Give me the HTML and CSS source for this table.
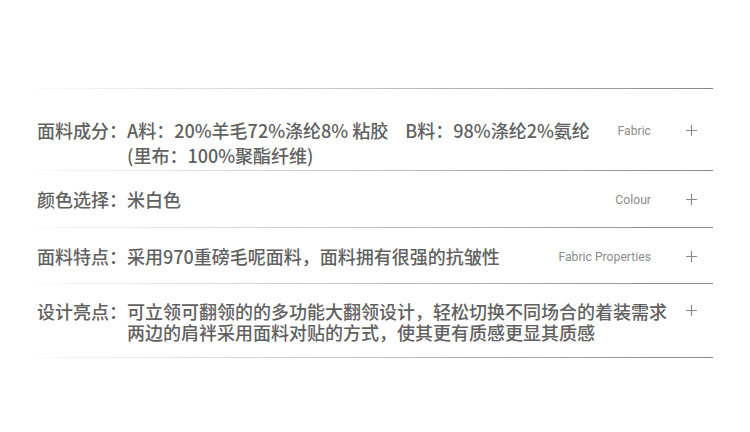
FILE: index.html
```html
<!DOCTYPE html>
<html lang="zh-CN">
<head>
  <meta charset="UTF-8">
  <title>商品详情</title>
  <link rel="stylesheet" href="styles.css">
</head>
<body>
  <div class="spec-list">
    <div class="spec-row first">
      <span class="spec-label">面料成分：</span>
      <span class="spec-value">A料：20%羊毛72%涤纶8% 粘胶<span class="gap"></span>B料：98%涤纶2%氨纶<br>(里布：100%聚酯纤维)</span>
      <span class="spec-en">Fabric</span>
      <span class="spec-plus"><svg width="11" height="11" viewBox="0 0 11 11"><path d="M5.5 0V11M0 5.5H11" stroke="#8a8a8a" stroke-width="1.2"/></svg></span>
    </div>
    <div class="spec-row">
      <span class="spec-label">颜色选择：</span>
      <span class="spec-value">米白色</span>
      <span class="spec-en">Colour</span>
      <span class="spec-plus"><svg width="11" height="11" viewBox="0 0 11 11"><path d="M5.5 0V11M0 5.5H11" stroke="#8a8a8a" stroke-width="1.2"/></svg></span>
    </div>
    <div class="spec-row third">
      <span class="spec-label">面料特点：</span>
      <span class="spec-value">采用970重磅毛呢面料，面料拥有很强的抗皱性</span>
      <span class="spec-en">Fabric Properties</span>
      <span class="spec-plus"><svg width="11" height="11" viewBox="0 0 11 11"><path d="M5.5 0V11M0 5.5H11" stroke="#8a8a8a" stroke-width="1.2"/></svg></span>
    </div>
    <div class="spec-row last">
      <span class="spec-label">设计亮点：</span>
      <span class="spec-value">可立领可翻领的的多功能大翻领设计，轻松切换不同场合的着装需求<br>两边的肩袢采用面料对贴的方式，使其更有质感更显其质感</span>
      <span class="spec-plus"><svg width="11" height="11" viewBox="0 0 11 11"><path d="M5.5 0V11M0 5.5H11" stroke="#8a8a8a" stroke-width="1.2"/></svg></span>
    </div>
  </div>
</body>
</html>
```

FILE: styles.css
```css
* { box-sizing: border-box; margin: 0; padding: 0 }
body {
  background: #fff;
  color: #616161;
  font-family: "Noto Sans CJK SC", "Noto Sans", sans-serif;
  font-size: 18px;
  font-weight: 500;
}
.spec-list {
  width: 676px;
  margin: 88px 0 0 37px;
  padding-top: 1px;
  background: linear-gradient(to right, #fafafa, #888) top / 100% 1px no-repeat;
}
.spec-row {
  display: flex;
  align-items: flex-start;
  padding: 16px 16px 16px 0;
  line-height: 25px;
  background: linear-gradient(to right, #fafafa, #888) bottom / 100% 1px no-repeat;
}
.spec-row.first { padding-top: 29px; padding-bottom: 3px }
.spec-row.third { padding-top: 16px; padding-bottom: 15px }
.spec-row.last { line-height: 21px; padding-top: 17px; padding-bottom: 15px }
.spec-label { white-space: nowrap }
.spec-value { flex: 1; white-space: nowrap }
.gap { display: inline-block; width: 17px }
.spec-en {
  margin-right: 35px;
  padding-top: 2px;
  font-family: Roboto, "Liberation Sans", sans-serif;
  font-size: 12.2px;
  font-weight: 400;
  line-height: 23px;
  color: #8c8c8c;
}
.spec-plus {
  display: flex;
  align-items: center;
  height: 25px;
}
.spec-row.last .spec-plus { height: 19px; margin-left: 14px }
```
